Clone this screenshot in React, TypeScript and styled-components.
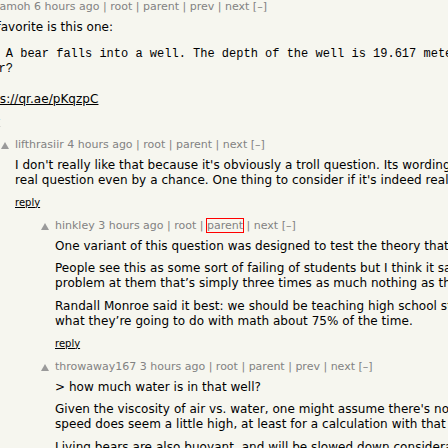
import React from "react";
import styled, { createGlobalStyle, css } from "styled-components";

const GlobalStyle = createGlobalStyle`
  html, body { margin: 0; padding: 0; background: #f6f6ef; overflow: hidden; }
`;

const Page = styled.div`
  width: 448px;
  height: 448px;
  overflow: hidden;
  background: #f6f6ef;
  font-family: "DejaVu Sans", Verdana, sans-serif;
`;

const Thread = styled.div`
  display: flex;
  flex-direction: column;
  gap: 9.5px;
  margin-left: -39px;
  width: 1400px;
`;

const Row = styled.div<{ $level: number }>`
  display: flex;
  align-items: flex-start;
  padding-left: ${(p) => p.$level * 40}px;
`;

const VoteCell = styled.div`
  flex: none;
  width: 14px;
  padding-top: 3.5px;
  display: flex;
`;

const Body = styled.div`
  display: flex;
  flex-direction: column;
  align-items: flex-start;
`;

const Comhead = styled.div`
  font-size: 11px;
  line-height: 14px;
  color: #828282;
  white-space: nowrap;
`;

const HeadLink = styled.a<{ $outlined?: boolean }>`
  color: #828282;
  text-decoration: none;
  ${(p) =>
    p.$outlined &&
    css`
      outline: 1px solid #ff0000;
    `}
`;

const CommText = styled.div`
  margin-top: 5.5px;
  font-size: 12px;
  line-height: 15px;
  letter-spacing: 0.05px;
  color: #000;
  white-space: nowrap;
  display: flex;
  flex-direction: column;
  gap: 7.5px;
`;

const Para = styled.div`
  display: flex;
  flex-direction: column;
`;

const Pre = styled.pre`
  margin: 3px 0 5px;
  padding: 2px;
  font-family: "Liberation Mono", "Courier New", monospace;
  font-size: 12px;
  line-height: 15px;
  letter-spacing: 0;
  white-space: pre;
`;

const TextLink = styled.a`
  color: #000;
  text-decoration: underline;
`;

const Reply = styled.div`
  margin-top: 8px;
  font-size: 10px;
  line-height: 14px;
  a {
    color: #000;
    text-decoration: underline;
  }
`;

const Arrow = () => (
  <svg width="8" height="7" viewBox="0 0 8 7">
    <polygon points="4,0 8,7 0,7" fill="#9a9a9a" />
  </svg>
);

type CommentData = {
  level: number;
  user: string;
  age: string;
  links: string[];
  outlined?: string;
  content: React.ReactNode;
};

const comments: CommentData[] = [
  {
    level: 0,
    user: "bamamoh",
    age: "6 hours ago",
    links: ["root", "parent", "prev", "next"],
    content: (
      <>
        <Para>My favorite is this one:</Para>
        <Pre>{"    A bear falls into a well. The depth of the well is 19.617 meters. It takes the bear 2 seconds to hit the bottom. What color is the\nbear?"}</Pre>
        <Para>
          <span>
            <TextLink href="#">https://qr.ae/pKqzpC</TextLink>
          </span>
        </Para>
      </>
    ),
  },
  {
    level: 1,
    user: "lifthrasiir",
    age: "4 hours ago",
    links: ["root", "parent", "next"],
    content: (
      <Para>
        <span>I don't really like that because it's obviously a troll question. Its wording makes it impossible to be a</span>
        <span>real question even by a chance. One thing to consider if it's indeed real is the gravity at the location.</span>
      </Para>
    ),
  },
  {
    level: 2,
    user: "hinkley",
    age: "3 hours ago",
    links: ["root", "parent", "next"],
    outlined: "parent",
    content: (
      <>
        <Para>One variant of this question was designed to test the theory that students don't read the whole problem.</Para>
        <Para>
          <span>People see this as some sort of failing of students but I think it says more about us. We throw a story</span>
          <span>problem at them that’s simply three times as much nothing as they need and act surprised.</span>
        </Para>
        <Para>
          <span>Randall Monroe said it best: we should be teaching high school students to recognize and handle</span>
          <span>what they’re going to do with math about 75% of the time.</span>
        </Para>
      </>
    ),
  },
  {
    level: 2,
    user: "throwaway167",
    age: "3 hours ago",
    links: ["root", "parent", "prev", "next"],
    content: (
      <>
        <Para>&gt; how much water is in that well?</Para>
        <Para>
          <span>Given the viscosity of air vs. water, one might assume there's no water in the well. The fall</span>
          <span>speed does seem a little high, at least for a calculation with that many significant figures.</span>
        </Para>
        <Para>Living bears are also buoyant, and will be slowed down considerably by any water in the well.</Para>
      </>
    ),
  },
];

const Comment = ({ c }: { c: CommentData }) => (
  <Row $level={c.level}>
    <VoteCell>
      <Arrow />
    </VoteCell>
    <Body>
      <Comhead>
        <HeadLink href="#">{c.user}</HeadLink> <HeadLink href="#">{c.age}</HeadLink>
        {c.links.map((l) => (
          <React.Fragment key={l}>
            {" | "}
            <HeadLink href="#" $outlined={c.outlined === l}>
              {l}
            </HeadLink>
          </React.Fragment>
        ))}{" "}
        <HeadLink href="#">[–]</HeadLink>
      </Comhead>
      <CommText>{c.content}</CommText>
      <Reply>
        <a href="#">reply</a>
      </Reply>
    </Body>
  </Row>
);

export default function App() {
  return (
    <Page>
      <GlobalStyle />
      <Thread>
        {comments.map((c) => (
          <Comment key={c.user} c={c} />
        ))}
      </Thread>
    </Page>
  );
}
